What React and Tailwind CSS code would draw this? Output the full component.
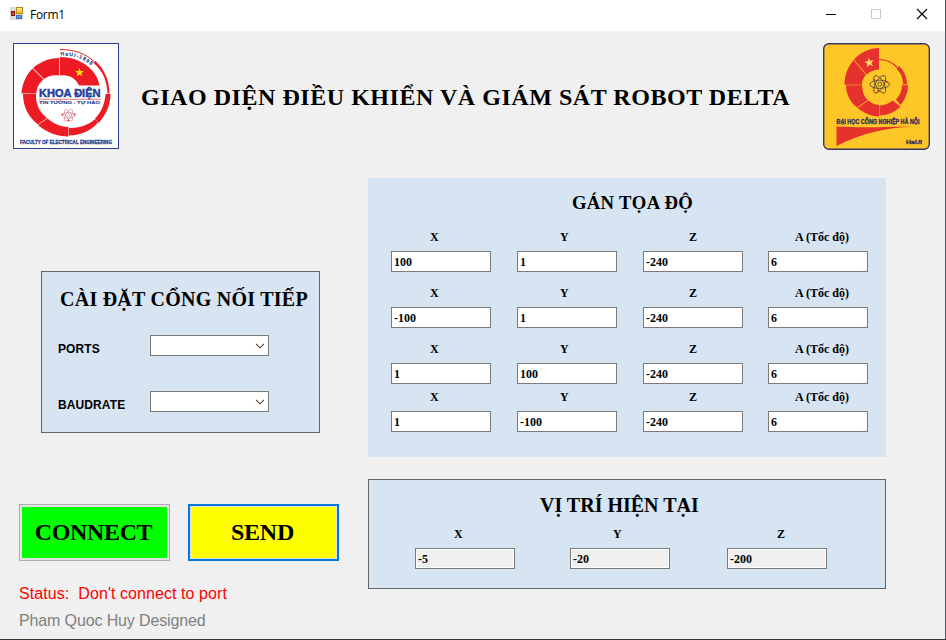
import React from "react";

const SERIF = "font-['Liberation_Serif',serif] font-bold text-black whitespace-nowrap";

function FormIcon() {
  return (
    <svg className="h-4 w-4" viewBox="0 0 16 16">
      <defs>
        <linearGradient id="gold" x1="0" y1="0" x2="0" y2="1">
          <stop offset="0" stopColor="#fff0a8" />
          <stop offset="1" stopColor="#eeb800" />
        </linearGradient>
      </defs>
      <rect x="1" y="1" width="13" height="13" fill="#dcdcdc" />
      <rect x="2.500" y="5.500" width="3" height="4" fill="#c9483a" stroke="#8c1710" />
      <rect x="7.500" y="1.500" width="6" height="6" fill="url(#gold)" stroke="#b48817" />
      <rect x="7.500" y="9.500" width="5" height="3" fill="#5b97e6" stroke="#3f6fc0" />
    </svg>
  );
}

function Atom({ cx, cy, r, stroke, dots, width }) {
  return (
    <g fill="none" stroke={stroke} strokeWidth={width}>
      {[0, 60, 120].map((a) => (
        <ellipse key={a} cx={cx} cy={cy} rx={r} ry={r * 0.42} transform={`rotate(${a} ${cx} ${cy})`} />
      ))}
      <circle cx={cx} cy={cy} r={r * 0.2} />
      {dots.map(([x, y]) => (
        <circle key={`${x}-${y}`} cx={x} cy={y} r="1" fill="#e5322d" stroke="none" />
      ))}
    </g>
  );
}

function FacultyLogo() {
  return (
    <svg className="h-[106px] w-[106px] overflow-visible" viewBox="0 0 106 106">
      <rect x="0.5" y="0.5" width="105" height="105" fill="#fff" stroke="#27408b" />
      <g fill="#ed1c24">
        <path d="M47 14V32.500C55 31 63 35 66 42.500H86.500C84 27 68 14 47 14Z" />
        <path d="M46.300 15C36 15 27 19 20 25L31 36C35 33 40 31.500 46.300 32.500Z" />
        <path d="M19.500 25.500C13 32 9 41 8.500 50.500H23.500C23.500 45 26 40 30.500 36.500Z" />
        <path d="M10 51H23C22.500 60 26 69 34 75L25 81.500C15 74 10 63 10 51Z" />
        <path d="M25 82L34.500 75.500C40 80 47 84 55.500 84V93.500C44 93.500 33 89 25 82Z" />
        <path d="M56 85C67 85.500 77 81 82 76L85 79.500C78 88 68 92 56 92.500Z" />
        <path d="M92.500 51H97.500C97.500 62 93 72 85.500 80L82 75.500C88.500 69 92 60 92.500 51Z" />
        <path d="M80.500 20L82.500 18C92 27 96.500 38 96.500 50.500H94.500C94 38 90 28 80.500 20Z" />
      </g>
      <path d="M47 6.500C61 6.500 73 10.500 82 19.500" fill="none" stroke="#ed1c24" strokeWidth="1" />
      <path d="M66.500 24.800L67.500 28H71L68.300 30L69.300 33.200L66.500 31.400L63.700 33.200L64.700 30L62 28H65.500Z" fill="#ffe800" />
      <path id="hauiArc" d="M47.500 12.500C60 12 71 15.500 80 24" fill="none" />
      <text fontFamily="Liberation Sans" fontWeight="bold" fontSize="5" fill="#27408b" stroke="#27408b" strokeWidth="0.15" textLength="33">
        <textPath href="#hauiArc">HaUI-1898</textPath>
      </text>
      <text x="26" y="54.300" fontFamily="Liberation Sans" fontWeight="bold" fontSize="11.500" fill="#1e429b" stroke="#1e429b" strokeWidth="0.5" textLength="61.500" lengthAdjust="spacingAndGlyphs">KHOA ĐIỆN</text>
      <path d="M26 56.300H88" stroke="#f2555a" strokeWidth="0.8" />
      <text x="26" y="60.500" fontFamily="Liberation Sans" fontWeight="bold" fontSize="3.800" fill="#27408b" stroke="#27408b" strokeWidth="0.1" textLength="61" lengthAdjust="spacingAndGlyphs">TIN TƯỞNG - TỰ HÀO</text>
      <Atom cx={55.5} cy={72.3} r={6.6} width={0.5} stroke="#c76b80" dots={[[49.5, 71.5], [61.500, 71.500], [55.500, 77.500]]} />
      <text x="7" y="101" fontFamily="Liberation Sans" fontWeight="bold" fontSize="5" fill="#27408b" stroke="#27408b" strokeWidth="0.3" textLength="92" lengthAdjust="spacingAndGlyphs">FACULTY OF ELECTRICAL ENGINEERING</text>
    </svg>
  );
}

function UniversityLogo() {
  return (
    <svg className="h-[107px] w-[107px] overflow-visible bg-white" viewBox="0 0 107 107">
      <rect x="0.700" y="0.700" width="105.600" height="105.600" rx="5" fill="#fec627" stroke="#3b3560" strokeWidth="1.400" />
      <g fill="#e5322d">
        <path d="M56 5V26.500C51 27 47 28.500 43.500 31.500L31 16.500C38 9 47 5 56 5Z" />
        <path d="M30.500 17L43 32C40 35 39 38.500 39 41.700H21.500C21.500 32 25 24 30.500 17Z" />
        <path d="M23 42.300H39C39.500 49 41 54 45 57L34 64.500C27 59 23 51 23 42.300Z" />
        <path d="M45.500 57.500C49 60.500 52 61.500 56 62V73.500C48 73 40.500 70 34.500 65Z" />
        <path d="M56.500 62.500C62 62 66 60.500 69.500 57.500L77.500 63.500C72 69 65 72 56.500 72.500Z" />
        <path d="M79 42.300H85C85 50 82 57 77.500 62L73 56.500C76.500 53 79 48 79 42.300Z" />
        <path d="M73.500 26L76 23C81 28 84 34 84 41.500H80C80 35 78 30 73.500 26Z" />
        <path d="M13.500 83.500C35 85 60 84 90 83.500C62 85 39 90 13.500 103Z" />
      </g>
      <path d="M56 16.500C62 16.500 69 19 74.500 24.500" fill="none" stroke="#e5322d" strokeWidth="1.100" />
      <path d="M45.500 14.500L47 17.800L50.500 17.300L48.300 20L50 23L46.700 21.800L44 24L44.200 20.500L41.500 18.700L45 18Z" fill="#ffd965" />
      <Atom cx={56.7} cy={41.3} r={9.8} width={0.8} stroke="#4a4045" dots={[[51, 36.500], [63.5, 39], [55, 48]]} />
      <text x="13.500" y="81" fontFamily="Liberation Sans" fontWeight="bold" fontSize="7.500" fill="#322c5c" stroke="#322c5c" strokeWidth="0.35" textLength="83" lengthAdjust="spacingAndGlyphs">ĐẠI HỌC CÔNG NGHIỆP HÀ NỘI</text>
      <text x="83" y="100.500" fontFamily="Liberation Sans" fontWeight="bold" fontSize="6" fill="#322c5c" stroke="#322c5c" strokeWidth="0.3" textLength="16" lengthAdjust="spacingAndGlyphs">HaUI</text>
    </svg>
  );
}

function TitleBar() {
  return (
    <div className="flex h-[31px] items-start bg-white">
      <div className="flex pt-[6px] pl-[9px]">
        <FormIcon />
        <span className="ml-[5px] font-['Open_Sans',sans-serif] text-[12px] leading-[18px] tracking-[-0.3px] text-black">Form1</span>
      </div>
      <svg className="ml-auto h-[31px] w-[135px]" viewBox="0 0 135 31" fill="none" shapeRendering="crispEdges">
        <path d="M16 14.500H26" stroke="#000" />
        <rect x="61.500" y="9.500" width="9" height="9" stroke="#ccc" />
        <path d="M107 9L117 19M117 9L107 19" stroke="#000" strokeWidth="1.100" shapeRendering="auto" />
      </svg>
    </div>
  );
}

function Combo({ label, className }) {
  return (
    <div className={`flex ${className}`}>
      <span className="mt-[7px] w-[92px] font-['Liberation_Sans',sans-serif] text-[12px] leading-[14px] font-bold tracking-[0.1px] text-black">{label}</span>
      <div className="flex h-[21px] w-[119px] items-center justify-end border border-[#7a7a7a] bg-white pr-[3px]">
        <svg className="h-[6px] w-[10px]" viewBox="0 0 10 6" fill="none">
          <path d="M1 0.800L5 4.800L9 0.800" stroke="#444" strokeWidth="1.100" />
        </svg>
      </div>
    </div>
  );
}

function Field({ label, value, labelClass, readOnly }) {
  return (
    <div className="flex w-[100px] flex-col">
      <span className={`${SERIF} text-[12px] leading-[14px] ${labelClass}`}>{label}</span>
      <div className={`${SERIF} mt-[7px] h-[21px] border border-[#7a7a7a] pl-[2px] text-[12px] leading-[20px] ${readOnly ? "bg-[#f0f0f0] shadow-[inset_0_0_0_1px_#fff]" : "bg-white"}`}>{value}</div>
    </div>
  );
}

const rows = [
  { values: ["100", "1", "-240", "6"], gap: "mt-[15px]" },
  { values: ["-100", "1", "-240", "6"], gap: "mt-[14px]" },
  { values: ["1", "100", "-240", "6"], gap: "mt-[14px]" },
  { values: ["1", "-100", "-240", "6"], gap: "mt-[6px]" },
];

export default function App() {
  return (
    <div className="flex h-[640px] w-[946px] flex-col overflow-hidden border-r border-b border-r-[#55585e] border-b-[#35363f] bg-[#f0f0f0]">
      <TitleBar />
      <header className="flex h-[147px] items-start pt-[12px] pr-[15px] pl-[13px]">
        <FacultyLogo />
        <h1 className={`${SERIF} mt-[38px] ml-[22px] text-[24px] leading-[32px] tracking-[0.54px]`}>GIAO DIỆN ĐIỀU KHIỂN VÀ GIÁM SÁT ROBOT DELTA</h1>
        <div className="ml-auto"><UniversityLogo /></div>
      </header>
      <main className="flex flex-1">
        <section className="w-[368px]">
          <div className="mt-[93px] ml-[41px] h-[162px] w-[279px] border border-[#646464] bg-[#d7e4f2] pl-[16px]">
            <h2 className={`${SERIF} mt-[15px] ml-[2px] text-[20px] leading-[24px] tracking-[0.25px]`}>CÀI ĐẶT CỔNG NỐI TIẾP</h2>
            <Combo label="PORTS" className="mt-[24px]" />
            <Combo label="BAUDRATE" className="mt-[35px]" />
          </div>
          <div className="mt-[71px] ml-[19px] flex gap-[18px]">
            <button className={`${SERIF} h-[57px] w-[151px] border border-[#adadad] bg-[#00ff00] pr-[2px] text-[24px] leading-[51px] tracking-[-0.35px] shadow-[inset_0_0_0_2px_#e6e1e6]`}>CONNECT</button>
            <button className={`${SERIF} h-[57px] w-[151px] border-2 border-[#0078d7] bg-[#ffff00] pr-[2px] text-[24px] leading-[51px] tracking-[-0.2px] shadow-[inset_0_0_0_1px_#e6e1e6]`}>SEND</button>
          </div>
          <div className="mt-[23px] ml-[19px] font-['Liberation_Sans',sans-serif] text-[16px] leading-[20px] whitespace-pre">
            <p className="tracking-[0.07px] text-[#ff0000]">{"Status:  Don't connect to port"}</p>
            <p className="mt-[7px] tracking-[-0.13px] text-[#808080]">Pham Quoc Huy Designed</p>
          </div>
        </section>
        <section className="w-[518px]">
          <div className="h-[279px] bg-[#d7e4f2] pl-[23px]">
            <h2 className={`${SERIF} pt-[13px] pl-[181px] text-[18.67px] leading-[24px] tracking-[0.32px]`}>GÁN TỌA ĐỘ</h2>
            {rows.map((row, i) => (
              <div key={i} className={`flex gap-[26px] ${row.gap}`}>
                <Field label="X" value={row.values[0]} labelClass="pl-[39px]" />
                <Field label="Y" value={row.values[1]} labelClass="pl-[43px]" />
                <Field label="Z" value={row.values[2]} labelClass="pl-[46px]" />
                <div className="-ml-px"><Field label="A (Tốc độ)" value={row.values[3]} labelClass="pl-[27px]" /></div>
              </div>
            ))}
          </div>
          <div className="mt-[22px] h-[110px] border border-[#646464] bg-[#d7e4f2] pl-[46px]">
            <h2 className={`${SERIF} pt-[13px] pl-[125px] text-[20px] leading-[24px]`}>VỊ TRÍ HIỆN TẠI</h2>
            <div className="mt-[10px] flex">
              <Field label="X" value="-5" labelClass="pl-[39px]" readOnly />
              <div className="ml-[55px]"><Field label="Y" value="-20" labelClass="pl-[43px]" readOnly /></div>
              <div className="ml-[57px]"><Field label="Z" value="-200" labelClass="pl-[50px]" readOnly /></div>
            </div>
          </div>
        </section>
      </main>
    </div>
  );
}
